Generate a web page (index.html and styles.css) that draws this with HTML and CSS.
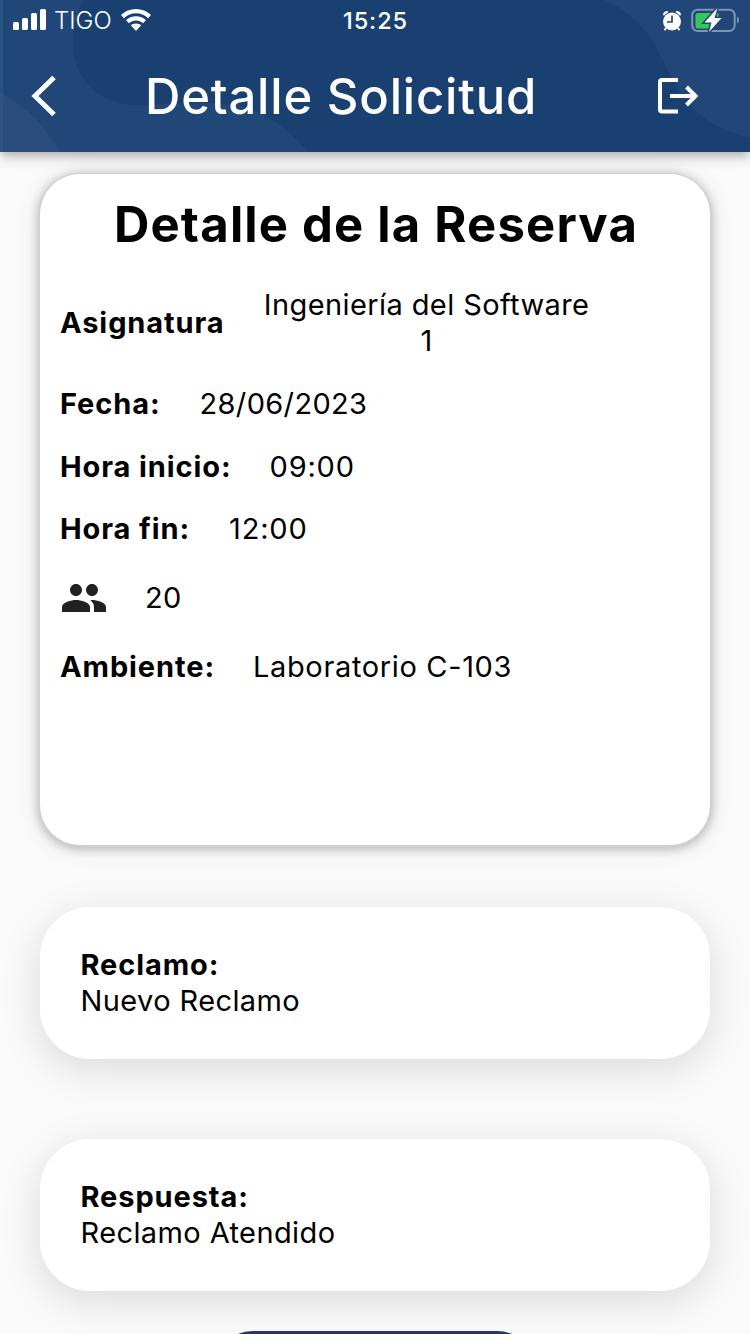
FILE: index.html
```html
<!DOCTYPE html>
<html lang="es">
<head>
<meta charset="utf-8">
<title>Detalle Solicitud</title>
<link rel="stylesheet" href="styles.css">
</head>
<body>
<div class="screen">
  <header class="header">
    <svg class="header-art" viewBox="0 0 750 152" aria-hidden="true">
      <path class="art-light" d="M0 0H84C76 14 73 28 73 45C74 80 101 105 135 105C185 104 215 100 250 108C275 119 292 134 309 152H0Z"/>
      <path class="art-lighter" d="M0 93C25 105 43 124 60 152H0Z"/>
      <path class="art-light" d="M604 0C629 11 646 27 658 50C674 82 684 105 710 122Q728 132 750 138V0Z"/>
      <path class="art-edge" d="M0 0H3V152H0Z"/>
    </svg>
    <div class="status">
      <div class="status-left">
        <svg class="signal" width="34" height="22" viewBox="0 0 34 22"><rect x="0" y="13" width="6" height="8" rx="1.6"/><rect x="9" y="9" width="6" height="12" rx="1.6"/><rect x="18" y="4" width="6" height="17" rx="1.6"/><rect x="27" y="0" width="6" height="21" rx="1.6"/></svg>
        <span class="carrier">TIGO</span>
        <svg class="wifi" width="30" height="22" viewBox="0 0 30 22"><path d="M15 0C9.200 0 4 2.200 0 6L3 9.200C6.200 6 10.500 4.300 15 4.300S23.800 6 27 9.200L30 6C26 2.200 20.800 0 15 0Z"/><path d="M15 7.300C11.200 7.300 7.700 8.700 5 11.200L8 14.300C9.900 12.500 12.300 11.500 15 11.500S20.100 12.500 22 14.300L25 11.200C22.300 8.700 18.800 7.300 15 7.300Z"/><path d="M15 14.400C12.900 14.400 11.200 15.100 9.800 16.300L15 22L20.200 16.300C18.800 15.100 17.100 14.400 15 14.400Z"/></svg>
      </div>
      <span class="clock">15:25</span>
      <div class="status-right">
        <svg class="alarm" width="20" height="21" viewBox="0 0 20 21"><circle cx="10" cy="11.500" r="9"/><path d="M1 4.500Q1.500 1 5.500 1L6.500 2L1.800 5.800ZM19 4.500Q18.500 1 14.500 1L13.500 2L18.200 5.800Z"/><path class="alarm-feet" d="M4 18L2.500 20.200M16 18L17.500 20.200"/><path class="alarm-hands" d="M10 5.500V12H5"/></svg>
        <svg class="battery" width="49" height="26" viewBox="0 0 49 26"><rect class="battery-shell" x="1.200" y="2.700" width="42.500" height="21.300" rx="5.500"/><path class="battery-tip" d="M46 9.500Q48 10.500 48 13T46 16.500Z"/><path class="battery-fill" d="M7 6H27.500V12L17 21.500H7Q4.500 21.500 4.500 19V8.500Q4.500 6 7 6Z"/><path class="battery-bolt" d="M26.500 1L13.500 15.500H20.500L18 25L30.500 11H23.500Z"/></svg>
      </div>
    </div>
    <nav class="toolbar">
      <svg class="back" width="26" height="42" viewBox="0 0 26 42"><path d="M23 2.500L4 21L23 39.500"/></svg>
      <h1 class="screen-title">Detalle Solicitud</h1>
      <svg class="logout" width="42" height="38" viewBox="0 0 42 38"><path d="M21 3H5Q3 3 3 5V32.500Q3 34.500 5 34.500H21"/><path d="M13 19H38M29.500 10L38.500 19L29.500 28"/></svg>
    </nav>
  </header>
  <main class="content">
    <section class="card">
      <h2 class="card-title">Detalle de la Reserva</h2>
      <div class="row"><b>Asignatura</b><span class="subject">Ingeniería del Software 1</span></div>
      <div class="row"><b>Fecha:</b><span class="date">28/06/2023</span></div>
      <div class="row row-start"><b>Hora inicio:</b><span class="time">09:00</span></div>
      <div class="row"><b>Hora fin:</b><span class="time">12:00</span></div>
      <div class="row row-people"><svg class="people" width="48" height="48" viewBox="0 0 24 24"><path d="M16 11c1.660 0 2.990-1.340 2.990-3S17.660 5 16 5c-1.660 0-3 1.340-3 3s1.340 3 3 3zm-8 0c1.660 0 2.990-1.340 2.990-3S9.660 5 8 5C6.340 5 5 6.340 5 8s1.340 3 3 3zm0 2c-2.330 0-7 1.170-7 3.500V19h14v-2.500c0-2.330-4.670-3.500-7-3.500zm8 0c-.290 0-.620.020-.970.050 1.160.840 1.970 1.970 1.970 3.450V19h6v-2.500c0-2.330-4.670-3.500-7-3.500z"/></svg><span>20</span></div>
      <div class="row"><b>Ambiente:</b><span class="room">Laboratorio C-103</span></div>
    </section>
    <section class="note">
      <b>Reclamo:</b>
      <span>Nuevo Reclamo</span>
    </section>
    <section class="note">
      <b>Respuesta:</b>
      <span>Reclamo Atendido</span>
    </section>
    <div class="action"></div>
  </main>
</div>
</body>
</html>
```
FILE: styles.css
```css
* { box-sizing: border-box; }
body { margin: 0; }
.screen {
  width: 750px; height: 1334px; overflow: hidden;
  display: flex; flex-direction: column;
  background: #fafafa; color: #000;
  font-family: Inter, "Liberation Sans", sans-serif;
}
.header {
  position: relative; flex: none; height: 152px;
  background: #194071; color: #fff;
  box-shadow: 0 4px 8px -2px rgba(0,0,0,.2), 0 8px 10px rgba(0,0,0,.09), 0 2px 18px rgba(0,0,0,.08);
}
.header-art { position: absolute; inset: 0; width: 750px; height: 152px; }
.art-light { fill: #214678; }
.art-lighter { fill: #2a4d7d; }
.art-edge { fill: #315b89; opacity: .55; }
.status {
  position: relative; height: 40px; padding: 0 10px 0 13px;
  display: grid; grid-template-columns: 1fr auto 1fr; align-items: center;
}
.status svg { fill: #fff; }
.status-left, .status-right { display: flex; align-items: center; }
.status-right { justify-content: flex-end; gap: 9px; }
.carrier { margin: 2px 9px 0 7px; font-size: 24px; line-height: 28px; font-weight: 300; letter-spacing: 0; }
.clock { font-size: 23.500px; line-height: 28px; font-weight: 500; margin: 2px 2px 0 0; letter-spacing: .9px; }
.status .alarm-feet { fill: none; stroke: #fff; stroke-width: 2; }
.status .alarm-hands { fill: none; stroke: #214678; stroke-width: 1.7; }
.status .battery-shell { fill: none; stroke: #7f95b3; stroke-width: 2; }
.status .battery-tip { fill: #7f95b3; }
.status .battery-fill { fill: #35c759; }
.battery-bolt { stroke: #214678; stroke-width: 3; paint-order: stroke; }
.toolbar {
  position: relative; height: 112px; padding: 0 51px 0 31px;
  display: flex; align-items: center;
}
.toolbar svg { fill: none; stroke: #fff; stroke-width: 4; }
.toolbar .back { stroke-width: 5; }
.logout { margin-left: auto; }
.screen-title { margin: 2px 0 0 88px; font-size: 49px; line-height: 60px; font-weight: 540; letter-spacing: .8px; white-space: nowrap; }
.content { flex: 1; padding: 22px 40px 0; display: flex; flex-direction: column; }
.card {
  flex: none; height: 671px; padding: 21px 20px 0;
  display: flex; flex-direction: column; gap: 27px;
  border-radius: 40px; background: #fff;
  box-shadow: 0 .5px 0 1.500px #d0d0d0, 0 2px 10px 2px rgba(0,0,0,.22), 0 2px 22px 2px rgba(0,0,0,.1);
  font-size: 29px; line-height: 36px;
}
.card-title { margin: 0 0 5px; padding-left: 2px; font-size: 49px; line-height: 60px; font-weight: 700; text-align: center; letter-spacing: 1.2px; white-space: nowrap; }
.row { display: flex; align-items: center; gap: 39px; white-space: nowrap; font-weight: 400; letter-spacing: .4px; }
.row b, .note b { font-weight: 650; letter-spacing: .9px; }
.row-start { gap: 38px; margin-bottom: -1px; }
.row-people { gap: 37px; }
.date { letter-spacing: .35px; }
.time { letter-spacing: .8px; }
.people { fill: #212121; }
.row .room { margin-left: -1px; letter-spacing: .65px; }
.subject { width: 340px; margin-left: -7px; text-align: center; white-space: normal; }
.note {
  flex: none; height: 152px; margin-top: 62px; padding: 40px 40px 40px 40.500px;
  display: flex; flex-direction: column;
  border-radius: 50px; background: #fff;
  box-shadow: 0 10px 40px rgba(0,0,0,.13);
  font-size: 29px; line-height: 36px; font-weight: 400; letter-spacing: .4px;
}
.note + .note { margin-top: 80px; }
.action { flex: none; align-self: center; width: 324px; height: 80px; margin-top: 40px; border-radius: 40px; background: #26346f; }
```
